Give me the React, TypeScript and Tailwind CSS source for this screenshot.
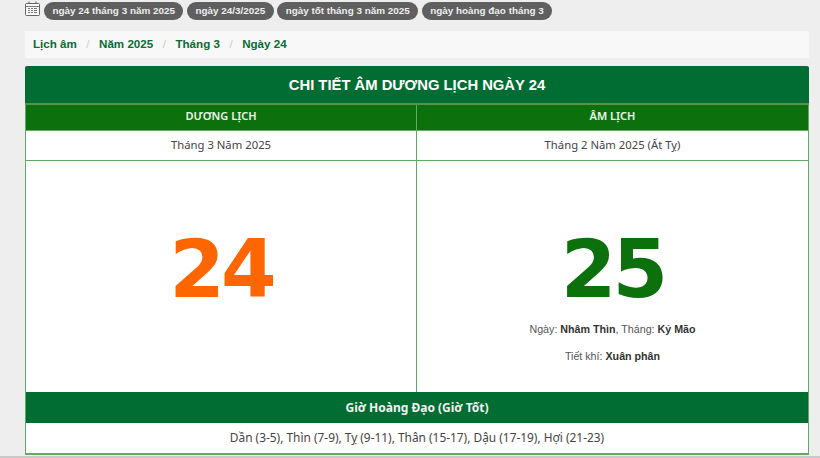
const pills = [
  "ngày 24 tháng 3 năm 2025",
  "ngày 24/3/2025",
  "ngày tốt tháng 3 năm 2025",
  "ngày hoàng đạo tháng 3",
];

const crumbs = ["Lịch âm", "Năm 2025", "Tháng 3", "Ngày 24"];

function CalendarIcon() {
  return (
    <svg width="15" height="15" viewBox="0 0 15 15" fill="none" className="shrink-0" aria-hidden>
      <rect x="0.5" y="2.5" width="14" height="12" rx="1" fill="#f8f8f8" stroke="#666" />
      <path d="M1 5.5h13" stroke="#777" />
      <path d="M4 0.5v2.5M11 0.5v2.5" stroke="#666" />
      <path d="M3 7.5h2M6 7.5h2M9 7.5h3M3 9.5h2M6 9.5h2M9 9.5h3M3 11.5h2M6 11.5h2M9 11.5h3" stroke="#777" />
    </svg>
  );
}

export default function App() {
  return (
    <div className="h-[458px] w-[820px] overflow-hidden bg-[#eeeeee] pl-[25px] pr-[11px] font-['Liberation_Sans',sans-serif]">
      <div className="flex h-[31px] items-start gap-[4px] pt-[1px]">
        <CalendarIcon />
        <div className="mt-[1px] flex gap-[3.5px]">
          {pills.map((p) => (
            <span key={p} className="h-[18px] rounded-full bg-[#5f5f5f] px-[8.5px] text-[9.9px] leading-[18px] font-bold text-[#eeeeee]">
              {p}
            </span>
          ))}
        </div>
      </div>

      <nav className="flex h-[27px] items-center bg-[#f8f8f8] pb-[1px] pl-[8px] text-[11.6px] font-bold text-[#0b6b34]">
        {crumbs.map((c, i) => (
          <span key={c} className="flex items-center">
            {i > 0 && <span className="px-[9.5px] font-normal text-[#cccccc]">/</span>}
            {c}
          </span>
        ))}
      </nav>

      <div className="mt-[8px] overflow-hidden rounded-t-[2px] border-b-2 border-[#63a965] font-['Noto_Sans',sans-serif]">
        <h1 className="flex h-[39px] items-center justify-center border-b-2 border-[#5d8f4e] bg-[#026d33] pt-[2px] font-['Liberation_Sans',sans-serif] text-[14.8px] font-bold text-white">
          CHI TIẾT ÂM DƯƠNG LỊCH NGÀY 24
        </h1>

        <div className="grid grid-cols-[391px_1fr] border-x border-[#63a965] bg-white">
          <div className="border-r border-[#63a965]">
            <div className="flex h-[25px] items-center justify-center bg-[#0c710d] pb-[2px] text-[11px] font-semibold text-[#eef5ee]">DƯƠNG LỊCH</div>
            <div className="flex h-[31px] items-center justify-center border-y border-[#63a965] text-[11.3px] text-[#444444]">Tháng 3 Năm 2025</div>
            <div className="flex h-[231px] items-center justify-center pb-[14px]">
              <span className="font-['DejaVu_Sans',sans-serif] text-[80px] leading-none font-bold tracking-[-4px] text-[#ff6600]">24</span>
            </div>
          </div>
          <div>
            <div className="flex h-[25px] items-center justify-center bg-[#0c710d] pb-[2px] text-[11px] font-semibold text-[#eef5ee]">ÂM LỊCH</div>
            <div className="flex h-[31px] items-center justify-center border-y border-[#63a965] text-[11.3px] text-[#444444]">Tháng 2 Năm 2025 (Ất Tỵ)</div>
            <div className="flex h-[231px] flex-col items-center pt-[57px] font-['Liberation_Sans',sans-serif]">
              <span className="font-['DejaVu_Sans',sans-serif] text-[80px] leading-[103px] font-bold tracking-[-4px] text-[#0c710d]">25</span>
              <p className="text-[10.7px] leading-[16px] text-[#555555]">
                Ngày: <b className="text-[#333333]">Nhâm Thìn</b>, Tháng: <b className="text-[#333333]">Kỷ Mão</b>
              </p>
              <p className="mt-[11px] text-[10.7px] leading-[16px] text-[#555555]">
                Tiết khí: <b className="text-[#333333]">Xuân phân</b>
              </p>
            </div>
          </div>
        </div>

        <div className="flex h-[31px] items-center justify-center border-x border-[#63a965] bg-[#026d33] pt-[1px] text-[12px] font-bold text-[#f2f2f2]">
          Giờ Hoàng Đạo (Giờ Tốt)
        </div>
        <div className="flex h-[30px] items-center justify-center border-x border-[#63a965] bg-white text-[11.9px] text-[#444444]">
          Dần (3-5), Thìn (7-9), Tỵ (9-11), Thân (15-17), Dậu (17-19), Hợi (21-23)
        </div>
      </div>
      <div className="-ml-[25px] mt-[1px] h-[2px] w-[820px] bg-[#c9c9c9]" />
    </div>
  );
}
